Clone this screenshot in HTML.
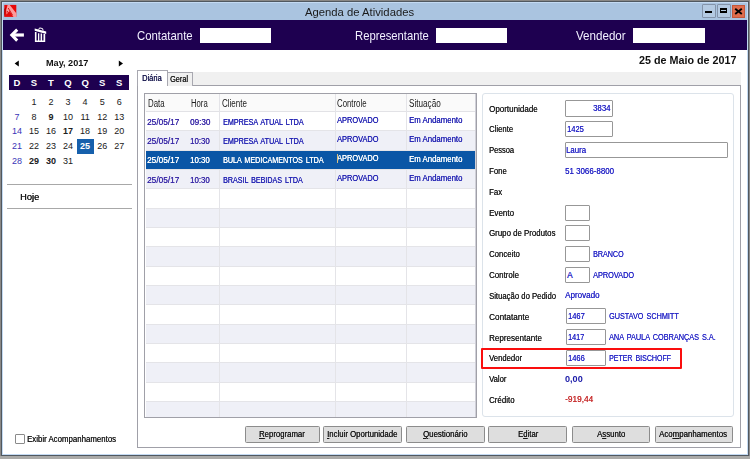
<!DOCTYPE html>
<html><head><meta charset="utf-8"><style>
html,body{margin:0;padding:0;}
body{width:750px;height:459px;overflow:hidden;background:#aaaaa8;position:relative;font-family:"Liberation Sans",sans-serif;}
body>div,body>span,body>svg{position:absolute;}
span{white-space:nowrap;line-height:1;}
</style></head><body>
<div style="left:0.00px;top:0.00px;width:750.00px;height:1.00px;background:#8a8886;"></div>
<div style="left:0.00px;top:0.00px;width:1.00px;height:456.00px;background:#8a8886;"></div>
<div style="left:749.00px;top:0.00px;width:1.00px;height:456.00px;background:#8c8c8c;"></div>
<div style="left:1.00px;top:1.00px;width:748.00px;height:455.00px;background:#505860;"></div>
<div style="left:2.00px;top:2.00px;width:746.00px;height:453.00px;background:#c4daf2;"></div>
<div style="left:3.00px;top:3.00px;width:744.00px;height:451.00px;background:#ffffff;"></div>
<div style="left:3.00px;top:3.00px;width:744.00px;height:17.00px;background:#aac4e0;"></div>
<svg style="left:0;top:0" width="20" height="20" viewBox="0 0 20 20"><rect x="4.3" y="4.9" width="12" height="12" fill="#e80808"/><path d="M4.3 16.9 L4.3 9 L6 7 L5 14 Z" fill="#a00000"/><path d="M7.6 4.9 L9.8 4.9 L16.3 13.2 L16.3 16.9 L13.5 16.9 L9.5 11 L6.5 14.5 L6.2 10 Z" fill="#ffb4b4" opacity="0.85"/><path d="M8.2 8 L12.5 15 M7.2 11 L9.8 15.8" stroke="#d01010" stroke-width="0.9"/></svg>
<span style="left:305.00px;top:6px;font-size:11.7px;color:#1a1a1a;transform:scaleX(0.9647);transform-origin:0 0;">Agenda de Atividades</span>
<div style="left:702.00px;top:4.00px;width:14.00px;height:14.00px;background:#b4cae2;border:1px solid #8494aa;box-sizing:border-box;border-radius:1px;"></div>
<div style="left:705.30px;top:11.00px;width:6.70px;height:2.00px;background:#000;"></div>
<div style="left:717.00px;top:4.00px;width:14.00px;height:14.00px;background:#b4cae2;border:1px solid #8494aa;box-sizing:border-box;border-radius:1px;"></div>
<div style="left:720.00px;top:8.00px;width:7.00px;height:5.00px;border:1.5px solid #000;border-top-width:2px;border-bottom-width:2px;box-sizing:border-box;"></div>
<div style="left:732.10px;top:4.60px;width:13.20px;height:13.10px;background:#df6d4d;border:1px solid #c4573a;box-sizing:border-box;"></div>
<svg style="left:734px;top:7.5px" width="9" height="7" viewBox="0 0 9 7"><path d="M1.2 0.8 L7.8 6 M7.8 0.8 L1.2 6" stroke="#000" stroke-width="1.9"/></svg>
<div style="left:3.00px;top:20.00px;width:744.00px;height:29.50px;background:#1e0050;"></div>
<svg style="left:0;top:0" width="750" height="459" viewBox="0 0 750 459"><path d="M17.2 29.6 L11.8 35.1 L17.2 40.6" stroke="#fff" stroke-width="3" fill="none" stroke-linejoin="miter"/><path d="M12.5 35 H23.9" stroke="#fff" stroke-width="3.2"/><path d="M34.7 28.4 L46.2 31.6 L46.2 33.9 L34.7 30.7 Z" fill="#fff"/><path d="M38.6 29.6 L39.6 27.9 L42.6 28.6 L43.1 30.6" stroke="#fff" stroke-width="1" fill="none"/><path d="M34.9 32 H36.5 V40.4 H38 V33.2 H39.3 V40.4 H40.6 V33.6 H42.1 V40.4 H43.5 V33.9 H45.2 V41.9 H34.9 Z" fill="#fff"/></svg>
<span style="left:137.20px;top:29px;font-size:13.1px;color:#f2f0ff;transform:scaleX(0.8690);transform-origin:0 0;">Contatante</span>
<div style="left:200.00px;top:28.00px;width:71.00px;height:15.40px;background:#fff;"></div>
<span style="left:354.90px;top:29px;font-size:13.1px;color:#f2f0ff;transform:scaleX(0.8599);transform-origin:0 0;">Representante</span>
<div style="left:436.00px;top:28.00px;width:71.00px;height:15.40px;background:#fff;"></div>
<span style="left:575.60px;top:29px;font-size:13.1px;color:#f2f0ff;transform:scaleX(0.8861);transform-origin:0 0;">Vendedor</span>
<div style="left:633.00px;top:28.00px;width:72.00px;height:15.40px;background:#fff;"></div>
<svg style="left:14px;top:59.5px" width="6" height="7" viewBox="0 0 6 7"><path d="M0.6 3.5 L4.8 0.4 L4.8 6.6 Z" fill="#000"/></svg>
<svg style="left:117.5px;top:59.5px" width="6" height="7" viewBox="0 0 6 7"><path d="M5 3.5 L0.8 0.4 L0.8 6.6 Z" fill="#000"/></svg>
<span style="left:46.30px;top:58px;font-size:9.8px;color:#101010;font-weight:bold;transform:scaleX(0.9302);transform-origin:0 0;">May, 2017</span>
<div style="left:9.00px;top:75.00px;width:120.00px;height:15.00px;background:#1e0050;"></div>
<span style="left:13.47px;top:78px;font-size:9.5px;color:#ffffff;font-weight:bold;">D</span>
<span style="left:30.78px;top:78px;font-size:9.5px;color:#ffffff;font-weight:bold;">S</span>
<span style="left:48.10px;top:78px;font-size:9.5px;color:#ffffff;font-weight:bold;">T</span>
<span style="left:64.36px;top:78px;font-size:9.5px;color:#ffffff;font-weight:bold;">Q</span>
<span style="left:81.41px;top:78px;font-size:9.5px;color:#ffffff;font-weight:bold;">Q</span>
<span style="left:98.98px;top:78px;font-size:9.5px;color:#ffffff;font-weight:bold;">S</span>
<span style="left:116.03px;top:78px;font-size:9.5px;color:#ffffff;font-weight:bold;">S</span>
<div style="left:77.00px;top:139.00px;width:17.30px;height:14.50px;background:#1660ac;"></div>
<span style="left:31.45px;top:98px;font-size:9.0px;color:#202020;">1</span>
<span style="left:48.50px;top:98px;font-size:9.0px;color:#202020;">2</span>
<span style="left:65.55px;top:98px;font-size:9.0px;color:#202020;">3</span>
<span style="left:82.60px;top:98px;font-size:9.0px;color:#202020;">4</span>
<span style="left:99.65px;top:98px;font-size:9.0px;color:#202020;">5</span>
<span style="left:116.70px;top:98px;font-size:9.0px;color:#202020;">6</span>
<span style="left:14.40px;top:113px;font-size:9.0px;color:#3a34b8;">7</span>
<span style="left:31.45px;top:113px;font-size:9.0px;color:#202020;">8</span>
<span style="left:48.50px;top:113px;font-size:9.0px;color:#202020;font-weight:bold;">9</span>
<span style="left:63.04px;top:113px;font-size:9.0px;color:#202020;">10</span>
<span style="left:80.43px;top:113px;font-size:9.0px;color:#202020;">11</span>
<span style="left:97.14px;top:113px;font-size:9.0px;color:#202020;">12</span>
<span style="left:114.19px;top:113px;font-size:9.0px;color:#202020;">13</span>
<span style="left:11.89px;top:127px;font-size:9.0px;color:#3a34b8;">14</span>
<span style="left:28.94px;top:127px;font-size:9.0px;color:#202020;">15</span>
<span style="left:45.99px;top:127px;font-size:9.0px;color:#202020;">16</span>
<span style="left:63.04px;top:127px;font-size:9.0px;color:#202020;font-weight:bold;">17</span>
<span style="left:80.09px;top:127px;font-size:9.0px;color:#202020;">18</span>
<span style="left:97.14px;top:127px;font-size:9.0px;color:#202020;">19</span>
<span style="left:114.19px;top:127px;font-size:9.0px;color:#202020;">20</span>
<span style="left:11.89px;top:142px;font-size:9.0px;color:#3a34b8;">21</span>
<span style="left:28.94px;top:142px;font-size:9.0px;color:#202020;">22</span>
<span style="left:45.99px;top:142px;font-size:9.0px;color:#202020;">23</span>
<span style="left:63.04px;top:142px;font-size:9.0px;color:#202020;">24</span>
<span style="left:80.09px;top:142px;font-size:9.0px;color:#ffffff;font-weight:bold;">25</span>
<span style="left:97.14px;top:142px;font-size:9.0px;color:#202020;">26</span>
<span style="left:114.19px;top:142px;font-size:9.0px;color:#202020;">27</span>
<span style="left:11.89px;top:157px;font-size:9.0px;color:#3a34b8;">28</span>
<span style="left:28.94px;top:157px;font-size:9.0px;color:#202020;font-weight:bold;">29</span>
<span style="left:45.99px;top:157px;font-size:9.0px;color:#202020;font-weight:bold;">30</span>
<span style="left:63.04px;top:157px;font-size:9.0px;color:#202020;">31</span>
<div style="left:7.00px;top:183.70px;width:124.60px;height:1.00px;background:#a8a8a8;"></div>
<span style="left:20.10px;top:192px;font-size:9.8px;color:#151515;text-shadow:0.3px 0 0 currentColor;transform:scaleX(0.9476);transform-origin:0 0;">Hoje</span>
<div style="left:7.00px;top:207.80px;width:124.60px;height:1.00px;background:#a8a8a8;"></div>
<div style="left:15.30px;top:433.60px;width:9.90px;height:10.10px;border:1px solid #8a8a8a;box-sizing:border-box;border-radius:1px;background:#fff;"></div>
<span style="left:27.00px;top:435px;font-size:8.6px;color:#202020;text-shadow:0.15px 0 0 currentColor;transform:scaleX(0.9137);transform-origin:0 0;">Exibir Acompanhamentos</span>
<span style="left:638.70px;top:56px;font-size:10.2px;color:#101010;font-weight:bold;transform:scaleX(1.0550);transform-origin:0 0;">25 de Maio de 2017</span>
<div style="left:137.00px;top:85.00px;width:604.30px;height:362.90px;border:1px solid #a0a0a8;box-sizing:border-box;background:#fff;"></div>
<div style="left:193.00px;top:71.50px;width:548.30px;height:13.70px;background:#f0f0f0;"></div>
<div style="left:137.00px;top:85.00px;width:604.30px;height:1.00px;background:#a0a0a8;"></div>
<div style="left:166.50px;top:72.00px;width:26.80px;height:14.00px;border:1px solid #a8a8b0;border-bottom:none;box-sizing:border-box;background:#f0f0f0;"></div>
<span style="left:170.00px;top:75px;font-size:8.8px;color:#202020;text-shadow:0.15px 0 0 currentColor;transform:scaleX(0.8365);transform-origin:0 0;">Geral</span>
<div style="left:137.00px;top:70.00px;width:30.50px;height:16.20px;border:1px solid #a8a8b0;border-bottom:none;box-sizing:border-box;background:#fff;"></div>
<span style="left:141.60px;top:74px;font-size:8.8px;color:#1a1a50;text-shadow:0.15px 0 0 currentColor;transform:scaleX(0.8571);transform-origin:0 0;">Diária</span>
<div style="left:144.00px;top:92.80px;width:332.60px;height:324.80px;border:1px solid #a0a0a8;box-sizing:border-box;background:#fff;"></div>
<div style="left:474.80px;top:93.80px;width:0.80px;height:322.80px;background:#d0d0d8;"></div>
<div style="left:145.00px;top:93.80px;width:329.80px;height:17.80px;background:#fafafa;"></div>
<div style="left:219.20px;top:111.60px;width:1.00px;height:19.32px;background:#e4e4e8;"></div>
<div style="left:335.20px;top:111.60px;width:1.00px;height:19.32px;background:#e4e4e8;"></div>
<div style="left:406.40px;top:111.60px;width:1.00px;height:19.32px;background:#e4e4e8;"></div>
<div style="left:145.50px;top:130.92px;width:329.30px;height:19.32px;background:#eff0f7;"></div>
<div style="left:219.20px;top:130.92px;width:1.00px;height:19.32px;background:#e4e4e8;"></div>
<div style="left:335.20px;top:130.92px;width:1.00px;height:19.32px;background:#e4e4e8;"></div>
<div style="left:406.40px;top:130.92px;width:1.00px;height:19.32px;background:#e4e4e8;"></div>
<div style="left:145.50px;top:130.42px;width:329.30px;height:1.00px;background:#e4e4e8;"></div>
<div style="left:145.50px;top:150.24px;width:329.30px;height:19.32px;background:#0a56a6;"></div>
<div style="left:145.50px;top:149.74px;width:329.30px;height:1.00px;background:#e4e4e8;"></div>
<div style="left:145.50px;top:169.56px;width:329.30px;height:19.32px;background:#eff0f7;"></div>
<div style="left:219.20px;top:169.56px;width:1.00px;height:19.32px;background:#e4e4e8;"></div>
<div style="left:335.20px;top:169.56px;width:1.00px;height:19.32px;background:#e4e4e8;"></div>
<div style="left:406.40px;top:169.56px;width:1.00px;height:19.32px;background:#e4e4e8;"></div>
<div style="left:145.50px;top:169.06px;width:329.30px;height:1.00px;background:#e4e4e8;"></div>
<div style="left:219.20px;top:188.88px;width:1.00px;height:19.32px;background:#e4e4e8;"></div>
<div style="left:335.20px;top:188.88px;width:1.00px;height:19.32px;background:#e4e4e8;"></div>
<div style="left:406.40px;top:188.88px;width:1.00px;height:19.32px;background:#e4e4e8;"></div>
<div style="left:145.50px;top:188.38px;width:329.30px;height:1.00px;background:#e4e4e8;"></div>
<div style="left:145.50px;top:208.20px;width:329.30px;height:19.32px;background:#eff0f7;"></div>
<div style="left:219.20px;top:208.20px;width:1.00px;height:19.32px;background:#e4e4e8;"></div>
<div style="left:335.20px;top:208.20px;width:1.00px;height:19.32px;background:#e4e4e8;"></div>
<div style="left:406.40px;top:208.20px;width:1.00px;height:19.32px;background:#e4e4e8;"></div>
<div style="left:145.50px;top:207.70px;width:329.30px;height:1.00px;background:#e4e4e8;"></div>
<div style="left:219.20px;top:227.52px;width:1.00px;height:19.32px;background:#e4e4e8;"></div>
<div style="left:335.20px;top:227.52px;width:1.00px;height:19.32px;background:#e4e4e8;"></div>
<div style="left:406.40px;top:227.52px;width:1.00px;height:19.32px;background:#e4e4e8;"></div>
<div style="left:145.50px;top:227.02px;width:329.30px;height:1.00px;background:#e4e4e8;"></div>
<div style="left:145.50px;top:246.84px;width:329.30px;height:19.32px;background:#eff0f7;"></div>
<div style="left:219.20px;top:246.84px;width:1.00px;height:19.32px;background:#e4e4e8;"></div>
<div style="left:335.20px;top:246.84px;width:1.00px;height:19.32px;background:#e4e4e8;"></div>
<div style="left:406.40px;top:246.84px;width:1.00px;height:19.32px;background:#e4e4e8;"></div>
<div style="left:145.50px;top:246.34px;width:329.30px;height:1.00px;background:#e4e4e8;"></div>
<div style="left:219.20px;top:266.16px;width:1.00px;height:19.32px;background:#e4e4e8;"></div>
<div style="left:335.20px;top:266.16px;width:1.00px;height:19.32px;background:#e4e4e8;"></div>
<div style="left:406.40px;top:266.16px;width:1.00px;height:19.32px;background:#e4e4e8;"></div>
<div style="left:145.50px;top:265.66px;width:329.30px;height:1.00px;background:#e4e4e8;"></div>
<div style="left:145.50px;top:285.48px;width:329.30px;height:19.32px;background:#eff0f7;"></div>
<div style="left:219.20px;top:285.48px;width:1.00px;height:19.32px;background:#e4e4e8;"></div>
<div style="left:335.20px;top:285.48px;width:1.00px;height:19.32px;background:#e4e4e8;"></div>
<div style="left:406.40px;top:285.48px;width:1.00px;height:19.32px;background:#e4e4e8;"></div>
<div style="left:145.50px;top:284.98px;width:329.30px;height:1.00px;background:#e4e4e8;"></div>
<div style="left:219.20px;top:304.80px;width:1.00px;height:19.32px;background:#e4e4e8;"></div>
<div style="left:335.20px;top:304.80px;width:1.00px;height:19.32px;background:#e4e4e8;"></div>
<div style="left:406.40px;top:304.80px;width:1.00px;height:19.32px;background:#e4e4e8;"></div>
<div style="left:145.50px;top:304.30px;width:329.30px;height:1.00px;background:#e4e4e8;"></div>
<div style="left:145.50px;top:324.12px;width:329.30px;height:19.32px;background:#eff0f7;"></div>
<div style="left:219.20px;top:324.12px;width:1.00px;height:19.32px;background:#e4e4e8;"></div>
<div style="left:335.20px;top:324.12px;width:1.00px;height:19.32px;background:#e4e4e8;"></div>
<div style="left:406.40px;top:324.12px;width:1.00px;height:19.32px;background:#e4e4e8;"></div>
<div style="left:145.50px;top:323.62px;width:329.30px;height:1.00px;background:#e4e4e8;"></div>
<div style="left:219.20px;top:343.44px;width:1.00px;height:19.32px;background:#e4e4e8;"></div>
<div style="left:335.20px;top:343.44px;width:1.00px;height:19.32px;background:#e4e4e8;"></div>
<div style="left:406.40px;top:343.44px;width:1.00px;height:19.32px;background:#e4e4e8;"></div>
<div style="left:145.50px;top:342.94px;width:329.30px;height:1.00px;background:#e4e4e8;"></div>
<div style="left:145.50px;top:362.76px;width:329.30px;height:19.32px;background:#eff0f7;"></div>
<div style="left:219.20px;top:362.76px;width:1.00px;height:19.32px;background:#e4e4e8;"></div>
<div style="left:335.20px;top:362.76px;width:1.00px;height:19.32px;background:#e4e4e8;"></div>
<div style="left:406.40px;top:362.76px;width:1.00px;height:19.32px;background:#e4e4e8;"></div>
<div style="left:145.50px;top:362.26px;width:329.30px;height:1.00px;background:#e4e4e8;"></div>
<div style="left:219.20px;top:382.08px;width:1.00px;height:19.32px;background:#e4e4e8;"></div>
<div style="left:335.20px;top:382.08px;width:1.00px;height:19.32px;background:#e4e4e8;"></div>
<div style="left:406.40px;top:382.08px;width:1.00px;height:19.32px;background:#e4e4e8;"></div>
<div style="left:145.50px;top:381.58px;width:329.30px;height:1.00px;background:#e4e4e8;"></div>
<div style="left:145.50px;top:401.40px;width:329.30px;height:15.20px;background:#eff0f7;"></div>
<div style="left:219.20px;top:401.40px;width:1.00px;height:15.20px;background:#e4e4e8;"></div>
<div style="left:335.20px;top:401.40px;width:1.00px;height:15.20px;background:#e4e4e8;"></div>
<div style="left:406.40px;top:401.40px;width:1.00px;height:15.20px;background:#e4e4e8;"></div>
<div style="left:145.50px;top:400.90px;width:329.30px;height:1.00px;background:#e4e4e8;"></div>
<div style="left:145.50px;top:111.10px;width:329.30px;height:1.00px;background:#e2e2e6;"></div>
<div style="left:219.20px;top:93.80px;width:1.00px;height:17.80px;background:#e4e4e8;"></div>
<div style="left:335.20px;top:93.80px;width:1.00px;height:17.80px;background:#e4e4e8;"></div>
<div style="left:406.40px;top:93.80px;width:1.00px;height:17.80px;background:#e4e4e8;"></div>
<span style="left:147.70px;top:99px;font-size:10px;color:#202020;transform:scaleX(0.7859);transform-origin:0 0;">Data</span>
<span style="left:191.30px;top:99px;font-size:10px;color:#202020;transform:scaleX(0.7705);transform-origin:0 0;">Hora</span>
<span style="left:222.20px;top:99px;font-size:10px;color:#202020;transform:scaleX(0.8031);transform-origin:0 0;">Cliente</span>
<span style="left:337.20px;top:99px;font-size:10px;color:#202020;transform:scaleX(0.7805);transform-origin:0 0;">Controle</span>
<span style="left:408.70px;top:99px;font-size:10px;color:#202020;transform:scaleX(0.8146);transform-origin:0 0;">Situação</span>
<span style="left:146.70px;top:118px;font-size:8.3px;color:#3a2aa8;text-shadow:0.15px 0 0 currentColor;transform:scaleX(0.9997);transform-origin:0 0;">25/05/17</span>
<span style="left:189.60px;top:118px;font-size:8.3px;color:#3a2aa8;text-shadow:0.15px 0 0 currentColor;transform:scaleX(0.9822);transform-origin:0 0;">09:30</span>
<span style="left:222.90px;top:118px;font-size:8.3px;color:#2424b4;text-shadow:0.15px 0 0 currentColor;transform:scaleX(0.8656);transform-origin:0 0;word-spacing:1.2px;">EMPRESA ATUAL LTDA</span>
<span style="left:337.20px;top:116px;font-size:8.3px;color:#2424b4;text-shadow:0.15px 0 0 currentColor;transform:scaleX(0.8938);transform-origin:0 0;">APROVADO</span>
<span style="left:408.50px;top:116px;font-size:8.3px;color:#2424b4;text-shadow:0.15px 0 0 currentColor;transform:scaleX(0.9410);transform-origin:0 0;">Em Andamento</span>
<span style="left:146.70px;top:137px;font-size:8.3px;color:#3a2aa8;text-shadow:0.15px 0 0 currentColor;transform:scaleX(0.9997);transform-origin:0 0;">25/05/17</span>
<span style="left:190.30px;top:137px;font-size:8.3px;color:#3a2aa8;text-shadow:0.15px 0 0 currentColor;transform:scaleX(0.9485);transform-origin:0 0;">10:30</span>
<span style="left:222.90px;top:137px;font-size:8.3px;color:#2424b4;text-shadow:0.15px 0 0 currentColor;transform:scaleX(0.8656);transform-origin:0 0;word-spacing:1.2px;">EMPRESA ATUAL LTDA</span>
<span style="left:337.20px;top:135px;font-size:8.3px;color:#2424b4;text-shadow:0.15px 0 0 currentColor;transform:scaleX(0.8938);transform-origin:0 0;">APROVADO</span>
<span style="left:408.50px;top:135px;font-size:8.3px;color:#2424b4;text-shadow:0.15px 0 0 currentColor;transform:scaleX(0.9410);transform-origin:0 0;">Em Andamento</span>
<span style="left:146.70px;top:156px;font-size:8.3px;color:#ffffff;text-shadow:0.15px 0 0 currentColor;transform:scaleX(0.9997);transform-origin:0 0;">25/05/17</span>
<span style="left:190.30px;top:156px;font-size:8.3px;color:#ffffff;text-shadow:0.15px 0 0 currentColor;transform:scaleX(0.9485);transform-origin:0 0;">10:30</span>
<span style="left:222.90px;top:156px;font-size:8.3px;color:#ffffff;text-shadow:0.15px 0 0 currentColor;transform:scaleX(0.8637);transform-origin:0 0;word-spacing:1.2px;">BULA MEDICAMENTOS LTDA</span>
<span style="left:337.20px;top:154px;font-size:8.3px;color:#ffffff;text-shadow:0.15px 0 0 currentColor;transform:scaleX(0.8938);transform-origin:0 0;">APROVADO</span>
<span style="left:408.50px;top:155px;font-size:8.3px;color:#ffffff;text-shadow:0.15px 0 0 currentColor;transform:scaleX(0.9410);transform-origin:0 0;">Em Andamento</span>
<span style="left:146.70px;top:176px;font-size:8.3px;color:#3a2aa8;text-shadow:0.15px 0 0 currentColor;transform:scaleX(0.9997);transform-origin:0 0;">25/05/17</span>
<span style="left:190.30px;top:176px;font-size:8.3px;color:#3a2aa8;text-shadow:0.15px 0 0 currentColor;transform:scaleX(0.9485);transform-origin:0 0;">10:30</span>
<span style="left:222.90px;top:176px;font-size:8.3px;color:#2424b4;text-shadow:0.15px 0 0 currentColor;transform:scaleX(0.8588);transform-origin:0 0;word-spacing:1.2px;">BRASIL BEBIDAS LTDA</span>
<span style="left:337.20px;top:174px;font-size:8.3px;color:#2424b4;text-shadow:0.15px 0 0 currentColor;transform:scaleX(0.8938);transform-origin:0 0;">APROVADO</span>
<span style="left:408.50px;top:174px;font-size:8.3px;color:#2424b4;text-shadow:0.15px 0 0 currentColor;transform:scaleX(0.9410);transform-origin:0 0;">Em Andamento</span>
<div style="left:336.60px;top:153.74px;width:0.80px;height:9.00px;background:#d8c080;"></div>
<div style="left:482.40px;top:93.30px;width:251.50px;height:323.90px;border:1px solid #dce3ea;box-sizing:border-box;border-radius:3px;"></div>
<span style="left:488.90px;top:104px;font-size:9.4px;color:#222222;text-shadow:0.18px 0 0 currentColor;transform:scaleX(0.8567);transform-origin:0 0;">Oportunidade</span>
<span style="left:488.90px;top:124px;font-size:9.4px;color:#222222;text-shadow:0.18px 0 0 currentColor;transform:scaleX(0.8271);transform-origin:0 0;">Cliente</span>
<span style="left:488.90px;top:145px;font-size:9.4px;color:#222222;text-shadow:0.18px 0 0 currentColor;transform:scaleX(0.8006);transform-origin:0 0;">Pessoa</span>
<span style="left:488.90px;top:166px;font-size:9.4px;color:#222222;text-shadow:0.18px 0 0 currentColor;transform:scaleX(0.8308);transform-origin:0 0;">Fone</span>
<span style="left:488.90px;top:187px;font-size:9.4px;color:#222222;text-shadow:0.18px 0 0 currentColor;transform:scaleX(0.8360);transform-origin:0 0;">Fax</span>
<span style="left:488.90px;top:208px;font-size:9.4px;color:#222222;text-shadow:0.18px 0 0 currentColor;transform:scaleX(0.8577);transform-origin:0 0;">Evento</span>
<span style="left:488.90px;top:228px;font-size:9.4px;color:#222222;text-shadow:0.18px 0 0 currentColor;transform:scaleX(0.8385);transform-origin:0 0;">Grupo de Produtos</span>
<span style="left:488.90px;top:249px;font-size:9.4px;color:#222222;text-shadow:0.18px 0 0 currentColor;transform:scaleX(0.8302);transform-origin:0 0;">Conceito</span>
<span style="left:488.90px;top:270px;font-size:9.4px;color:#222222;text-shadow:0.18px 0 0 currentColor;transform:scaleX(0.8444);transform-origin:0 0;">Controle</span>
<span style="left:488.90px;top:291px;font-size:9.4px;color:#222222;text-shadow:0.18px 0 0 currentColor;transform:scaleX(0.8242);transform-origin:0 0;">Situação do Pedido</span>
<span style="left:488.90px;top:312px;font-size:9.4px;color:#222222;text-shadow:0.18px 0 0 currentColor;transform:scaleX(0.8763);transform-origin:0 0;">Contatante</span>
<span style="left:488.90px;top:333px;font-size:9.4px;color:#222222;text-shadow:0.18px 0 0 currentColor;transform:scaleX(0.8595);transform-origin:0 0;">Representante</span>
<span style="left:488.90px;top:353px;font-size:9.4px;color:#222222;text-shadow:0.18px 0 0 currentColor;transform:scaleX(0.8224);transform-origin:0 0;">Vendedor</span>
<span style="left:488.90px;top:374px;font-size:9.4px;color:#222222;text-shadow:0.18px 0 0 currentColor;transform:scaleX(0.8190);transform-origin:0 0;">Valor</span>
<span style="left:488.90px;top:395px;font-size:9.4px;color:#222222;text-shadow:0.18px 0 0 currentColor;transform:scaleX(0.8448);transform-origin:0 0;">Crédito</span>
<div style="left:565.00px;top:100.30px;width:47.50px;height:16.40px;border:1px solid #979797;box-sizing:border-box;background:#fff;border-radius:1px;"></div>
<span style="left:593.10px;top:104px;font-size:8.3px;color:#2a2ac8;text-shadow:0.15px 0 0 currentColor;transform:scaleX(0.9478);transform-origin:0 0;">3834</span>
<div style="left:565.00px;top:121.20px;width:47.50px;height:16.30px;border:1px solid #979797;box-sizing:border-box;background:#fff;border-radius:1px;"></div>
<span style="left:567.20px;top:125px;font-size:8.3px;color:#2a2ac8;text-shadow:0.15px 0 0 currentColor;transform:scaleX(0.9099);transform-origin:0 0;">1425</span>
<div style="left:565.00px;top:142.00px;width:163.00px;height:16.00px;border:1px solid #979797;box-sizing:border-box;background:#fff;border-radius:1px;"></div>
<span style="left:566.40px;top:146px;font-size:8.3px;color:#2a2ac8;text-shadow:0.15px 0 0 currentColor;transform:scaleX(0.9421);transform-origin:0 0;">Laura</span>
<span style="left:565.20px;top:167px;font-size:8.3px;color:#2a2ac8;text-shadow:0.15px 0 0 currentColor;transform:scaleX(0.9565);transform-origin:0 0;">51 3066-8800</span>
<div style="left:565.00px;top:204.70px;width:25.00px;height:15.90px;border:1px solid #979797;box-sizing:border-box;background:#fff;border-radius:1px;"></div>
<div style="left:565.00px;top:225.00px;width:25.00px;height:16.40px;border:1px solid #979797;box-sizing:border-box;background:#fff;border-radius:1px;"></div>
<div style="left:565.00px;top:246.00px;width:25.00px;height:16.00px;border:1px solid #979797;box-sizing:border-box;background:#fff;border-radius:1px;"></div>
<span style="left:593.00px;top:250px;font-size:8.3px;color:#2a2ac8;text-shadow:0.15px 0 0 currentColor;transform:scaleX(0.8617);transform-origin:0 0;">BRANCO</span>
<div style="left:565.00px;top:266.90px;width:25.00px;height:15.90px;border:1px solid #979797;box-sizing:border-box;background:#fff;border-radius:1px;"></div>
<span style="left:567.00px;top:271px;font-size:8.3px;color:#2a2ac8;text-shadow:0.15px 0 0 currentColor;">A</span>
<span style="left:593.00px;top:271px;font-size:8.3px;color:#2a2ac8;text-shadow:0.15px 0 0 currentColor;transform:scaleX(0.8831);transform-origin:0 0;">APROVADO</span>
<span style="left:565.00px;top:291px;font-size:8.3px;color:#2a2ac8;text-shadow:0.15px 0 0 currentColor;transform:scaleX(0.9738);transform-origin:0 0;">Aprovado</span>
<div style="left:565.60px;top:308.30px;width:40.80px;height:16.10px;border:1px solid #979797;box-sizing:border-box;background:#fff;border-radius:1px;"></div>
<span style="left:568.00px;top:312px;font-size:8.3px;color:#2a2ac8;text-shadow:0.15px 0 0 currentColor;transform:scaleX(0.9044);transform-origin:0 0;">1467</span>
<span style="left:609.30px;top:312px;font-size:8.3px;color:#2a2ac8;text-shadow:0.15px 0 0 currentColor;transform:scaleX(0.8741);transform-origin:0 0;word-spacing:1.2px;">GUSTAVO SCHMITT</span>
<div style="left:565.60px;top:329.20px;width:40.80px;height:16.20px;border:1px solid #979797;box-sizing:border-box;background:#fff;border-radius:1px;"></div>
<span style="left:567.50px;top:333px;font-size:8.3px;color:#2a2ac8;text-shadow:0.15px 0 0 currentColor;transform:scaleX(0.8774);transform-origin:0 0;">1417</span>
<span style="left:609.30px;top:333px;font-size:8.3px;color:#2a2ac8;text-shadow:0.15px 0 0 currentColor;transform:scaleX(0.8788);transform-origin:0 0;word-spacing:1.2px;">ANA PAULA COBRANÇAS S.A.</span>
<div style="left:565.60px;top:350.00px;width:40.80px;height:16.20px;border:1px solid #979797;box-sizing:border-box;background:#fff;border-radius:1px;"></div>
<span style="left:567.50px;top:354px;font-size:8.3px;color:#2a2ac8;text-shadow:0.15px 0 0 currentColor;transform:scaleX(0.9044);transform-origin:0 0;">1466</span>
<span style="left:609.30px;top:354px;font-size:8.3px;color:#2a2ac8;text-shadow:0.15px 0 0 currentColor;transform:scaleX(0.8477);transform-origin:0 0;word-spacing:1.2px;">PETER BISCHOFF</span>
<span style="left:565.00px;top:375px;font-size:8.8px;color:#1a1aa8;font-weight:bold;transform:scaleX(1.0334);transform-origin:0 0;">0,00</span>
<span style="left:565.10px;top:395px;font-size:8.3px;color:#c83030;text-shadow:0.15px 0 0 currentColor;transform:scaleX(1.0018);transform-origin:0 0;">-919,44</span>
<div style="left:481.00px;top:347.50px;width:201.20px;height:21.30px;border:2.2px solid #fa0e0e;box-sizing:border-box;border-radius:1px;"></div>
<div style="left:245.20px;top:426.00px;width:74.40px;height:16.80px;background:#dedede;border:1px solid #8c8c8c;box-sizing:border-box;border-radius:1.5px;"></div>
<span style="left:259.40px;top:430px;font-size:8.6px;color:#1a1a1a;text-shadow:0.15px 0 0 currentColor;transform:scaleX(0.9040);transform-origin:0 0;"><u>R</u>eprogramar</span>
<div style="left:323.40px;top:426.00px;width:78.50px;height:16.80px;background:#dedede;border:1px solid #8c8c8c;box-sizing:border-box;border-radius:1.5px;"></div>
<span style="left:327.20px;top:430px;font-size:8.6px;color:#1a1a1a;text-shadow:0.15px 0 0 currentColor;transform:scaleX(0.9090);transform-origin:0 0;"><u>I</u>ncluir Oportunidade</span>
<div style="left:405.70px;top:426.00px;width:79.20px;height:16.80px;background:#dedede;border:1px solid #8c8c8c;box-sizing:border-box;border-radius:1.5px;"></div>
<span style="left:422.80px;top:430px;font-size:8.6px;color:#1a1a1a;text-shadow:0.15px 0 0 currentColor;transform:scaleX(0.9147);transform-origin:0 0;"><u>Q</u>uestionário</span>
<div style="left:488.00px;top:426.00px;width:79.10px;height:16.80px;background:#dedede;border:1px solid #8c8c8c;box-sizing:border-box;border-radius:1.5px;"></div>
<span style="left:517.70px;top:430px;font-size:8.6px;color:#1a1a1a;text-shadow:0.15px 0 0 currentColor;transform:scaleX(0.9036);transform-origin:0 0;">E<u>d</u>itar</span>
<div style="left:571.80px;top:426.00px;width:78.50px;height:16.80px;background:#dedede;border:1px solid #8c8c8c;box-sizing:border-box;border-radius:1.5px;"></div>
<span style="left:596.80px;top:430px;font-size:8.6px;color:#1a1a1a;text-shadow:0.15px 0 0 currentColor;transform:scaleX(0.9107);transform-origin:0 0;">A<u>s</u>sunto</span>
<div style="left:654.60px;top:426.00px;width:78.10px;height:16.80px;background:#dedede;border:1px solid #8c8c8c;box-sizing:border-box;border-radius:1.5px;"></div>
<span style="left:659.10px;top:430px;font-size:8.6px;color:#1a1a1a;text-shadow:0.15px 0 0 currentColor;transform:scaleX(0.9177);transform-origin:0 0;">Aco<u>m</u>panhamentos</span>
</body></html>
